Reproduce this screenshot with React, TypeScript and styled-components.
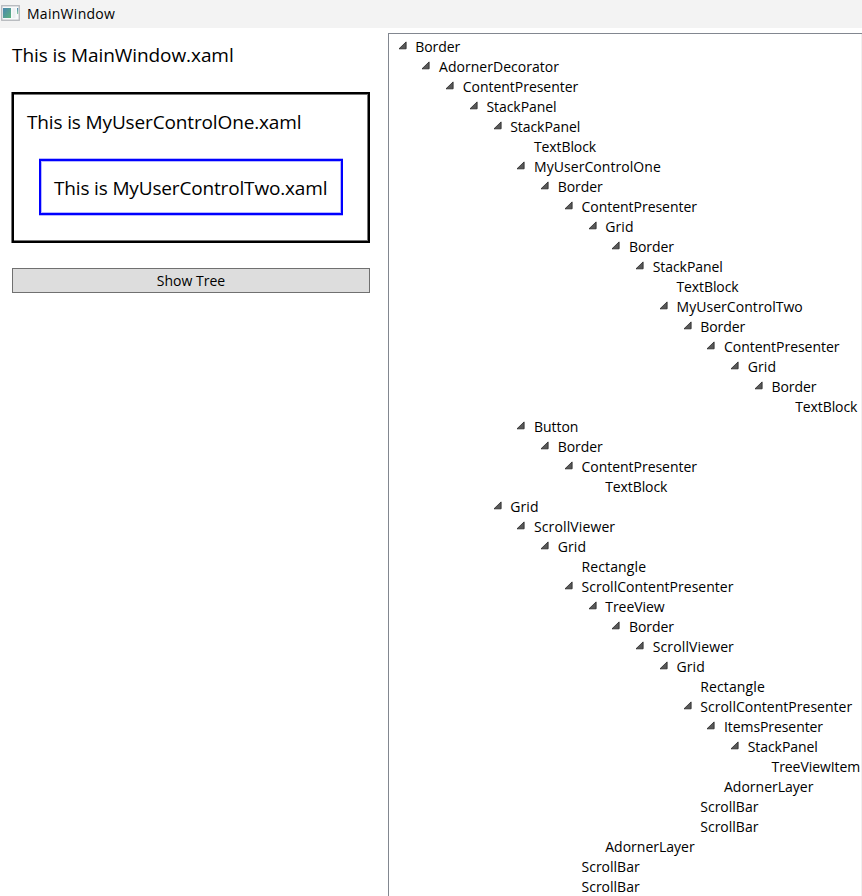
import React from 'react';
import styled, { createGlobalStyle } from 'styled-components';

const GlobalStyle = createGlobalStyle`
  body {
    margin: 0;
    overflow: hidden;
    background: #fff;
    color: #000;
    font: 14px/20px "Open Sans", "Noto Sans", sans-serif;
  }
`;

const Window = styled.div`
  display: flex;
  flex-direction: column;
  width: 862px;
  height: 896px;
  overflow: hidden;
`;

const TitleBar = styled.header`
  display: flex;
  flex: none;
  align-items: center;
  gap: 7px;
  box-sizing: border-box;
  height: 28px;
  padding-left: 1px;
  background: #f3f3f3;
  letter-spacing: 0.28px;

  svg {
    display: block;
    margin-top: -3px;
  }
`;

const Body = styled.main`
  display: grid;
  grid-template-columns: 388px 1fr;
  flex: 1;
  min-height: 0;
`;

const Content = styled.section`
  display: flex;
  flex-direction: column;
  padding: 14px 18px 0 12px;
`;

const Text = styled.div<{ $tracking: number }>`
  height: 26px;
  font-size: 19px;
  line-height: 26px;
  letter-spacing: ${(p) => p.$tracking}px;
  white-space: nowrap;
`;

const OuterBorder = styled.div`
  box-sizing: border-box;
  height: 151px;
  margin-top: 24px;
  padding: 15px 25px 0 13px;
  border: 2px solid #000;
  box-shadow:
    -1px 0 0 #777,
    inset 0 1px 0 #777,
    inset -1px -1px 0 #777;
`;

const InnerBorder = styled.div`
  box-sizing: border-box;
  height: 56px;
  margin-top: 24px;
  margin-left: 12px;
  padding: 14px 0 0 13px;
  border: 2px solid #00f;
  box-shadow:
    0 -1px 0 #b8b8ff,
    0 1px 0 #b8b8ff,
    inset 0 0 0 1px #b8b8ff;
`;

const Button = styled.button`
  box-sizing: border-box;
  height: 25px;
  margin-top: 25px;
  padding: 0;
  border: 1px solid #707070;
  background: #ddd;
  color: inherit;
  font: inherit;
`;

const TreePanel = styled.section`
  display: flex;
  margin-top: 5px;
  min-height: 0;
  overflow: hidden;
  border-top: 1px solid #828790;
  border-left: 1px solid #828790;
`;

const TreeRoot = styled.div`
  flex: 1;
  min-width: 0;
  padding: 3px 0 0 8.5px;
`;

const ScrollTrack = styled.div`
  width: 1px;
  background: #f0f0f0;
`;

const Row = styled.div`
  display: flex;
  height: 20px;
  white-space: nowrap;
`;

const Expander = styled.span`
  flex: none;
  width: 17.75px;
  height: 20px;

  svg {
    display: block;
    margin-top: 4px;
  }
`;

const Label = styled.span<{ $tracking: number }>`
  letter-spacing: ${(p) => p.$tracking}px;
`;

const Children = styled.div`
  margin-left: 23.75px;
`;

interface TreeNode {
  name: string;
  children: TreeNode[];
}

const node = (name: string, ...children: TreeNode[]): TreeNode => ({ name, children });

const tracking: Record<string, number> = {
  AdornerDecorator: 0.03,
  ContentPresenter: -0.03,
  StackPanel: -0.07,
  TextBlock: -0.1,
  MyUserControlOne: 0.06,
  MyUserControlTwo: 0.05,
  Grid: 0.1,
  Border: -0.06,
  Button: -0.04,
  ScrollViewer: 0.12,
  Rectangle: 0.12,
  ScrollContentPresenter: 0.02,
  TreeView: -0.04,
  ItemsPresenter: -0.08,
  TreeViewItem: -0.06,
};

const controlTwo = node('MyUserControlTwo',
  node('Border',
    node('ContentPresenter',
      node('Grid',
        node('Border', node('TextBlock'))))));

const controlOne = node('MyUserControlOne',
  node('Border',
    node('ContentPresenter',
      node('Grid',
        node('Border',
          node('StackPanel', node('TextBlock'), controlTwo))))));

const button = node('Button',
  node('Border',
    node('ContentPresenter', node('TextBlock'))));

const treeView = node('TreeView',
  node('Border',
    node('ScrollViewer',
      node('Grid',
        node('Rectangle'),
        node('ScrollContentPresenter',
          node('ItemsPresenter', node('StackPanel', node('TreeViewItem'))),
          node('AdornerLayer')),
        node('ScrollBar'),
        node('ScrollBar')))));

const treePane = node('Grid',
  node('ScrollViewer',
    node('Grid',
      node('Rectangle'),
      node('ScrollContentPresenter', treeView, node('AdornerLayer')),
      node('ScrollBar'),
      node('ScrollBar'))));

const tree = node('Border',
  node('AdornerDecorator',
    node('ContentPresenter',
      node('StackPanel',
        node('StackPanel', node('TextBlock'), controlOne, button),
        treePane))));

function TreeItem({ item }: { item: TreeNode }) {
  const expanded = item.children.length > 0;
  return (
    <div>
      <Row>
        <Expander>
          {expanded && (
            <svg width="9" height="10" viewBox="0 0 9 10">
              <path d="M8.1 0.9v6.9H1z" fill="#595959" stroke="#303030" strokeWidth="0.9" />
            </svg>
          )}
        </Expander>
        <Label $tracking={tracking[item.name] ?? 0}>{item.name}</Label>
      </Row>
      {expanded && (
        <Children>
          {item.children.map((child, i) => (
            <TreeItem key={i} item={child} />
          ))}
        </Children>
      )}
    </div>
  );
}

function WindowIcon() {
  return (
    <svg width="19" height="16" viewBox="0 0 19 16">
      <defs>
        <linearGradient id="pane" x1="0" y1="0" x2="1" y2="1">
          <stop offset="0" stopColor="#4a86b0" />
          <stop offset="1" stopColor="#5cb37c" />
        </linearGradient>
        <linearGradient id="strip" x1="0" y1="0" x2="0" y2="1">
          <stop offset="0" stopColor="#4a86b0" />
          <stop offset="1" stopColor="#8fd0a4" />
        </linearGradient>
      </defs>
      <rect x="0.75" y="0.75" width="17.5" height="14.5" fill="#f8fafb" stroke="#b3b6bb" strokeWidth="1.3" />
      <rect x="2" y="3" width="8" height="10" fill="url(#pane)" />
      <rect x="11.5" y="3" width="3" height="10" fill="#eceff1" />
      <rect x="16" y="3" width="1.2" height="6" fill="url(#strip)" />
    </svg>
  );
}

export default function App() {
  return (
    <Window>
      <GlobalStyle />
      <TitleBar>
        <WindowIcon />
        <span>MainWindow</span>
      </TitleBar>
      <Body>
        <Content>
          <Text $tracking={-0.08}>This is MainWindow.xaml</Text>
          <OuterBorder>
            <Text $tracking={-0.14}>This is MyUserControlOne.xaml</Text>
            <InnerBorder>
              <Text $tracking={-0.16}>This is MyUserControlTwo.xaml</Text>
            </InnerBorder>
          </OuterBorder>
          <Button>Show Tree</Button>
        </Content>
        <TreePanel>
          <TreeRoot>
            <TreeItem item={tree} />
          </TreeRoot>
          <ScrollTrack />
        </TreePanel>
      </Body>
    </Window>
  );
}
